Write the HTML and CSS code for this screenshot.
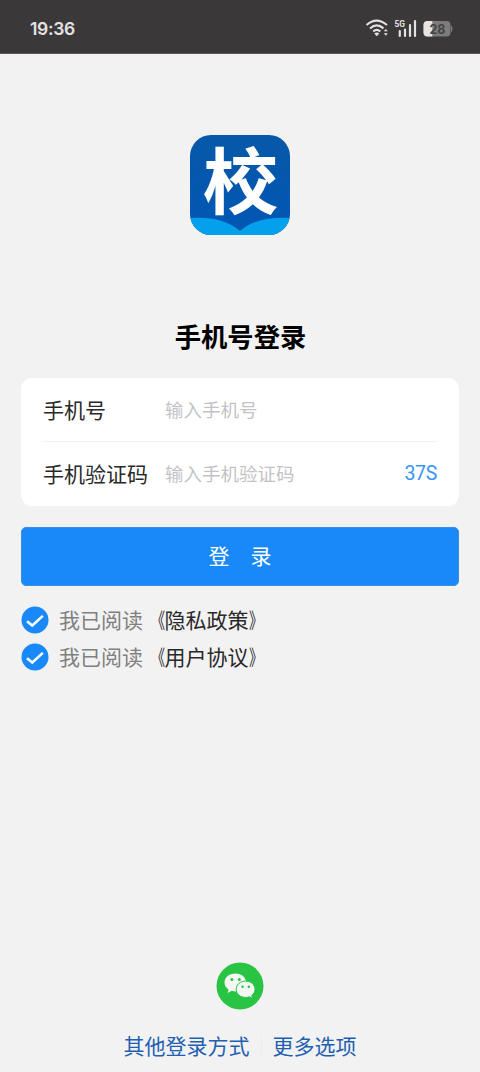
FILE: index.html
```html
<!DOCTYPE html>
<html lang="zh-CN">
<head>
<meta charset="utf-8">
<meta name="viewport" content="width=device-width, initial-scale=1">
<title>手机号登录</title>
<link rel="stylesheet" href="styles.css">
</head>
<body>
<header class="status">
  <span class="time">19:36</span>
  <svg class="status-icons" viewBox="0 0 90 24" width="90" height="24" aria-hidden="true">
    <g fill="none" stroke="#e2e2e2" stroke-width="2.1">
      <path d="M1.5 9Q11.500 .2 22 9"/>
      <path d="M5 12.400Q11.700 6.200 18.500 12.400"/>
      <path d="M8.200 15.500Q11.700 12.200 15.300 15.500"/>
    </g>
    <path d="M9.300 17.400Q11.800 15.400 14.300 17.400L11.800 20.200ZM18.800 15.300L20.800 13L22.800 15.300ZM18.800 17.300H22.800L20.800 19.700Z" fill="#e2e2e2"/>
    <text class="net" x="29.500" y="10.700" textLength="10.500" lengthAdjust="spacingAndGlyphs">5G</text>
    <path d="M34.800 15V20M40 13.500V20M45 9V20M50 5V20" stroke="#e2e2e2" stroke-width="2.200" stroke-linecap="round"/>
    <path d="M62.500 5H81.500A4 4 0 0 1 85.500 9V16.500A4 4 0 0 1 81.500 20.500H62.500A4 4 0 0 1 58.500 16.500V9A4 4 0 0 1 62.500 5Z" fill="#7d7c7c"/>
    <path d="M86 9Q89 13 86 16.500Z" fill="#7d7c7c"/>
    <path d="M67.300 5H62.500A4 4 0 0 0 58.500 9V16.500A4 4 0 0 0 62.500 20.500H67.300Z" fill="#e5e5e5"/>
    <text class="charge" x="64.500" y="17.600" textLength="16" lengthAdjust="spacingAndGlyphs">28</text>
  </svg>
</header>
<main class="login">
  <svg class="logo" viewBox="0 0 100 100" role="img" aria-label="校">
    <defs>
      <linearGradient id="blue" x2="0" y2="1"><stop stop-color="#0758a8"/><stop offset="1" stop-color="#0057b3"/></linearGradient>
      <clipPath id="tile"><rect width="100" height="100" rx="21"/></clipPath>
    </defs>
    <g clip-path="url(#tile)">
      <rect width="100" height="100" fill="url(#blue)"/>
      <path d="M0 83Q33 81 50 96Q67 81 100 83V100H0Z" fill="#05a0ec"/>
    </g>
    <text class="logo-text" transform="translate(50.500 72.500) scale(.98 .93)" text-anchor="middle">校</text>
  </svg>
  <h1 class="title">手机号登录</h1>
  <form class="form">
    <div class="card">
      <label class="field"><span class="label">手机号</span><span class="hint">输入手机号</span></label>
      <label class="field"><span class="label">手机验证码</span><span class="hint">输入手机验证码</span><span class="timer">37S</span></label>
    </div>
    <button class="submit" type="button"><span>登</span><span>录</span></button>
    <div class="agree">
      <svg class="check" viewBox="0 0 28 28"><circle cx="14" cy="14" r="13.500"/><path d="M6 15.200L11.300 19.500L21.800 9.800"/></svg>
      <span>我已阅读</span><a class="doc"><span class="open">《</span>隐私政策<span class="close">》</span></a>
    </div>
    <div class="agree">
      <svg class="check" viewBox="0 0 28 28"><circle cx="14" cy="14" r="13.500"/><path d="M6 15.200L11.300 19.500L21.800 9.800"/></svg>
      <span>我已阅读</span><a class="doc"><span class="open">《</span>用户协议<span class="close">》</span></a>
    </div>
  </form>
  <footer class="footer">
    <svg class="wechat" viewBox="0 0 48 48" role="img" aria-label="微信">
      <circle cx="24" cy="24" r="23.500" fill="#2ac445"/>
      <path d="M19.500 11.500C13 11.500 8.500 15.400 8.500 20.500C8.500 23.400 10 25.700 12.500 27.400L11.700 31L15.700 28.800Q18 29.500 20.500 29.400C26 29 30 25.400 30 20.500C30 15.300 25.500 11.500 19.500 11.500Z" fill="#f3f8f3"/>
      <path d="M29.500 19.100C24.300 19.100 20.200 22.600 20.200 27.300C20.200 32 24.300 35.400 29.500 35.400Q31.600 35.400 33.300 34.800L36.500 36.300L35.700 33.500C37.800 32 39 29.800 39 27.300C39 22.600 34.800 19.100 29.500 19.100Z" fill="#f3f8f3" stroke="#2ac445"/>
      <g fill="#2ac445"><circle cx="15.900" cy="17.400" r="1.500"/><circle cx="23.300" cy="17.400" r="1.500"/><circle cx="26.600" cy="24.700" r="1.250"/><circle cx="32.800" cy="24.700" r="1.250"/></g>
    </svg>
    <nav class="links"><a>其他登录方式</a><i class="divider"></i><a>更多选项</a></nav>
  </footer>
</main>
</body>
</html>
```
FILE: styles.css
```css
* {
  box-sizing: border-box;
}

body {
  display: flex;
  flex-direction: column;
  height: 1072px;
  margin: 0;
  background: #f2f2f2;
  color: #292929;
  font: 21px/30px "Noto Sans CJK SC", sans-serif;
}

.status {
  display: flex;
  justify-content: space-between;
  align-items: center;
  height: 54px;
  padding: 2px 25px 0 30px;
  border-bottom: 1px solid #5b595a;
  background: #3b3839;
}

.time {
  padding-top: 2px;
  color: #e2e2e2;
  font: 600 17.5px/24px Inter, sans-serif;
  letter-spacing: -0.3px;
}

.net {
  fill: #e2e2e2;
  font: 700 9px Roboto, sans-serif;
}

.charge {
  fill: #454344;
  font: 700 13px Inter, sans-serif;
}

.login {
  display: flex;
  flex: 1;
  flex-direction: column;
  align-items: center;
  padding: 81px 21px 12px;
}

.logo {
  width: 100px;
  height: 100px;
  overflow: visible;
}

.logo-text {
  fill: #fff;
  font: 700 77px "Noto Sans CJK SC", sans-serif;
}

.title {
  margin: 81px 0 22px;
  padding-left: 1px;
  color: #000;
  font-size: 26.3px;
  font-weight: 700;
  line-height: 40px;
}

.form {
  width: 100%;
}

.card {
  height: 128px;
  margin-bottom: 21px;
  padding: 0 22px;
  border-radius: 11px;
  background: #fff;
}

.field {
  display: flex;
  align-items: center;
  height: 63px;
  padding-bottom: 1px;
}

.field + .field {
  height: 64px;
  border-top: 1px solid #f2f2f2;
}

.label {
  width: 122px;
}

.hint {
  color: #c3c3c7;
  font-size: 18.5px;
}

.timer {
  margin-left: auto;
  padding-top: 2px;
  color: #3796f2;
  font: 19.5px/30px Roboto, sans-serif;
  letter-spacing: -0.3px;
}

.submit {
  display: flex;
  justify-content: center;
  align-items: center;
  gap: 21px;
  width: 100%;
  height: 59px;
  margin-bottom: 15px;
  padding: 0 0 3px;
  border: 1px solid #398fe6;
  border-radius: 5px;
  background: #1989fa;
  color: #fff;
  font: inherit;
}

.agree {
  display: flex;
  align-items: center;
  height: 37.5px;
  color: #808080;
}

.agree > span,
.doc {
  margin-top: -2px;
}

.check {
  width: 28px;
  height: 28px;
  margin-right: 10px;
  fill: #1989fa;
}

.check path {
  fill: none;
  stroke: #fff;
  stroke-width: 2.5;
}

.doc {
  margin-left: 0.5px;
  color: #292929;
}

.open,
.close {
  display: inline-block;
  transform: scaleX(0.67);
  transform-origin: right center;
}

.close {
  transform-origin: left center;
}

.footer {
  display: flex;
  flex-direction: column;
  align-items: center;
  margin-top: auto;
}

.wechat {
  width: 48px;
  height: 48px;
  margin-bottom: 20px;
}

.links {
  display: flex;
  align-items: center;
  gap: 11px;
  color: #1f60b0;
}

.divider {
  width: 1px;
  height: 18px;
  background: #e9edf2;
}
```
